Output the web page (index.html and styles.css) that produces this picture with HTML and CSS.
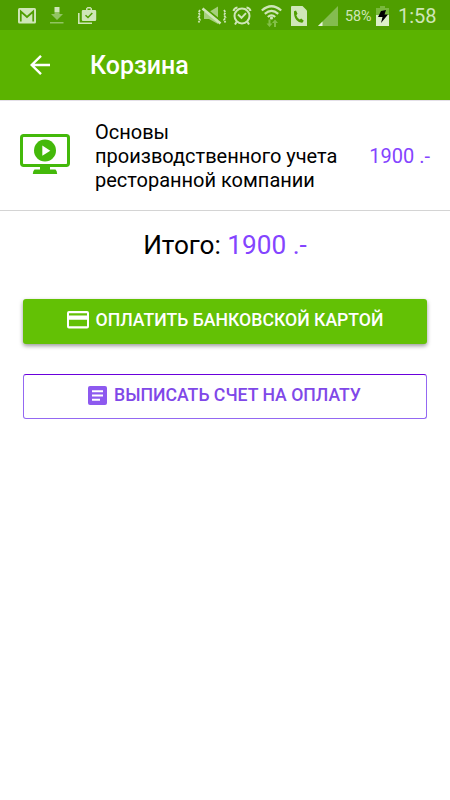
FILE: index.html
```html
<!DOCTYPE html>
<html lang="ru">
<head>
  <meta charset="UTF-8">
  <meta name="viewport" content="width=device-width, initial-scale=1.0">
  <title>Корзина</title>
  <link rel="stylesheet" href="styles.css">
</head>
<body>
  <div class="status-bar">
    <div class="status-left">
      <!-- mail -->
      <svg width="18" height="16" viewBox="0 0 18 16">
        <rect x="0" y="0" width="18" height="15.500" rx="1.500" fill="#cfe6b8"/>
        <path d="M2.800 13.500V3.500L9 9l6.200-5.500v10" fill="none" stroke="#4f9e00" stroke-width="1.700"/>
      </svg>
      <!-- download -->
      <svg width="14" height="18" viewBox="0 0 14 18">
        <path d="M4.500 0h5v5h-5z" fill="#cfe6b8"/>
        <path d="M4.500 5h5v2H13l-6 6-6-6h3.500zM0 15h13.500v1.500H0z" fill="#92c462"/>
      </svg>
      <!-- tasks -->
      <svg width="19" height="18" viewBox="0 0 19 18">
        <path d="M.8 6v10.200H14" fill="none" stroke="#cfe6b8" stroke-width="1.600"/>
        <path fill-rule="evenodd" d="M5 3h3V1.500L9.500 0h3L14 1.500V3h3q1.200 0 1.200 1.200v8.600q0 1.200-1.200 1.200H5q-1.200 0-1.200-1.200V4.200Q3.800 3 5 3zm4.500 0h3V1.500h-3z" fill="#cfe6b8"/>
        <path d="M7.500 8.200l2.500 2.300 4.300-4.500" fill="none" stroke="#4f9e00" stroke-width="1.500"/>
      </svg>
    </div>
    <div class="status-right">
      <!-- muted, vibrate -->
      <svg class="icon-mute" width="30" height="20" viewBox="0 0 30 20">
        <path d="M7 6h5l9-5.500V18l-9-5H7z" fill="#a5d07c"/>
        <path d="M7 1.500l17 13.500" stroke="#4f9e00" stroke-width="2"/>
        <path d="M5.500 2.500l18 15" stroke="#cfe6b8" stroke-width="2.600"/>
        <path d="M3 4L1.500 6.500 3 9l-1.500 2.500L3 14l-1.500 2.500M27 4l1.500 2.500L27 9l1.500 2.500L27 14l1.500 2.500" fill="none" stroke="#cfe6b8" stroke-width="1.700" stroke-dasharray="2.400 .8"/>
      </svg>
      <!-- alarm -->
      <svg class="icon-alarm" width="20" height="20" viewBox="0 0 20 20">
        <g fill="none" stroke="#cfe6b8">
          <circle cx="10" cy="10" r="7.500" stroke-width="2"/>
          <path d="M6 8.500l3.500 3.300L14 7.200" stroke-width="1.900"/>
          <path d="M1.500 5Q2 2 5.500 1.500M18.500 5Q18 2 14.500 1.500M4.500 16L3 18.500M15.500 16l1.500 2.500" stroke-width="2"/>
        </g>
      </svg>
      <!-- wifi with traffic arrows -->
      <svg class="icon-wifi" width="21" height="22" viewBox="0 0 21 22">
        <g fill="none" stroke="#cfe6b8" stroke-width="2.200">
          <path d="M.8 5.500Q10.500-3 20.200 5.500"/>
          <path d="M3.800 8.800q6.700-5.800 13.400 0"/>
          <path d="M6.800 12q3.700-3.300 7.400 0"/>
        </g>
        <path d="M7.500 14.500h2v4h2l-3 3.500-3-3.500h2zM13 22h2v-4h2l-3-3.500-3 3.500h2z" fill="#83bf48"/>
        <circle cx="10.500" cy="13" r="1.600" fill="#cfe6b8"/>
      </svg>
      <!-- sim call -->
      <svg class="icon-sim" width="16" height="20" viewBox="0 0 16 20">
        <path d="M1 0h10.500L16 4.500V20H0V1q0-1 1-1z" fill="#cfe6b8"/>
        <path d="M3 5.200l2-.7 1.500 3.300-1.200 1.400q.9 2.900 3.400 4.200l1.500-.9 2.600 2.300-1.500 2q-3.200.2-5.900-2.800T3 5.200z" fill="#4f9e00"/>
      </svg>
      <!-- signal -->
      <svg class="icon-signal" width="20" height="20" viewBox="0 0 20 20">
        <path d="M20 0v20H0z" fill="#84bc50"/>
        <path d="M4.500 15.500V20H0z" fill="#e8f4dc"/>
      </svg>
      <span class="battery-level">58%</span>
      <!-- battery -->
      <svg class="icon-battery" width="13" height="20" viewBox="0 0 13 20">
        <path d="M4 0h5v2h4v7H0V2h4z" fill="#79b83c"/>
        <path d="M0 9h13v11H0z" fill="#dcefc8"/>
        <path d="M5 5l5-1-1.500 4.500H12L5 17l1.500-6H2z" fill="#000"/>
      </svg>
      <span class="clock">1:58</span>
    </div>
  </div>

  <header class="app-bar">
    <svg width="20" height="20" viewBox="0 0 20 20">
      <path d="M20 10H1.700M11 .9L1.700 10l9.300 9.100" fill="none" stroke="#fff" stroke-width="2.400"/>
    </svg>
    <h1 class="title">Корзина</h1>
  </header>

  <main>
    <div class="cart-item">
      <svg class="course-icon" width="50" height="40" viewBox="0 0 50 40">
        <rect x="1.500" y="1.500" width="47" height="30" rx="2.200" fill="none" stroke="#44b90a" stroke-width="3"/>
        <circle cx="25" cy="16.500" r="11" fill="#44b90a"/>
        <path d="M22.300 11.500v10.300l8-5.100z" fill="#fff"/>
        <path d="M20 32h10v3.500h5.500q1.500 1 1.700 4.500H12.800q.2-3.500 1.700-4.500H20z" fill="#44b90a"/>
      </svg>
      <div class="item-name">Основы производственного учета ресторанной компании</div>
      <div class="item-price">1900 .-</div>
    </div>

    <div class="total">Итого: <span class="total-price">1900 .-</span></div>

    <div class="actions">
      <button class="btn btn-card">
        <svg width="22" height="18" viewBox="0 0 22 18">
          <path fill-rule="evenodd" d="M2 0h18q2 0 2 2v13.500q0 2-2 2H2q-2 0-2-2V2Q0 0 2 0zm0 2.200v2.300h18V2.200zm0 6.600v6.400h18V8.800z" fill="#fff"/>
        </svg>
        <span>ОПЛАТИТЬ БАНКОВСКОЙ КАРТОЙ</span>
      </button>
      <button class="btn btn-invoice">
        <svg width="19" height="19" viewBox="0 0 19 19">
          <rect width="19" height="19" rx="2" fill="#8d59ef"/>
          <path d="M4 5.200h11M4 9.500h11M4 13.800h8" stroke="#fff" stroke-width="2"/>
        </svg>
        <span>ВЫПИСАТЬ СЧЕТ НА ОПЛАТУ</span>
      </button>
    </div>
  </main>
</body>
</html>
```
FILE: styles.css
```css
* {
  box-sizing: border-box;
}

body {
  margin: 0;
  background-color: #ffffff;
  color: #000000;
  font-family: Roboto, Arial, sans-serif;
}

svg {
  display: block;
  flex: none;
}

.status-bar {
  height: 30px;
  padding: 0 14px 0 18px;
  display: flex;
  justify-content: space-between;
  background-color: #4f9e00;
  color: #cfe6b8;
}

.status-left {
  padding-top: 1px;
  display: flex;
  align-items: center;
  gap: 14px;
}

.status-right {
  padding-top: 1px;
  display: flex;
  align-items: center;
}

.icon-alarm {
  margin-left: 5px;
}

.icon-wifi {
  margin-left: 9px;
}

.icon-sim {
  margin-left: 9px;
}

.icon-signal {
  margin-left: 11px;
}

.battery-level {
  width: 27px;
  margin-left: 7px;
  padding-top: 1px;
  font-size: 14.300px;
  white-space: nowrap;
}

.icon-battery {
  margin-left: 4px;
}

.clock {
  width: 38px;
  margin-left: 9px;
  font-size: 20px;
  white-space: nowrap;
}

.app-bar {
  height: 70px;
  padding-left: 30px;
  display: flex;
  align-items: center;
  gap: 40px;
  background-color: #5bb300;
  color: #ffffff;
}

.title {
  margin: 0;
  font-size: 25px;
  font-weight: 500;
}

.cart-item {
  height: 111px;
  padding: 0 20px;
  display: flex;
  align-items: center;
  border-top: 1px solid #e4e0e8;
  border-bottom: 1px solid #d4d4d4;
}

.course-icon {
  margin-bottom: 4px;
}

.item-name {
  width: 260px;
  margin-left: 25px;
  font-size: 20px;
  line-height: 24px;
}

.item-price {
  margin-left: auto;
  font-size: 20px;
  color: #8444ff;
  white-space: nowrap;
}

.total {
  padding-top: 16px;
  font-size: 26.200px;
  line-height: 36px;
  text-align: center;
}

.total-price {
  color: #8444ff;
}

.actions {
  padding: 36px 23px 0;
  display: flex;
  flex-direction: column;
  gap: 30px;
}

.btn {
  height: 45px;
  padding: 0 0 3px;
  display: flex;
  align-items: center;
  justify-content: center;
  gap: 7px;
  border: none;
  border-radius: 3px;
  font-family: inherit;
  font-size: 17.650px;
  font-weight: 500;
  white-space: nowrap;
}

.btn-card {
  background-color: #63c105;
  color: #ffffff;
  box-shadow: 0 2px 4px rgba(0, 0, 0, 0.4);
}

.btn-invoice {
  padding-right: 1px;
  background-color: #ffffff;
  border: 1px solid #9468f2;
  border-top-color: #6a00dc;
  color: #8048e8;
}
```
